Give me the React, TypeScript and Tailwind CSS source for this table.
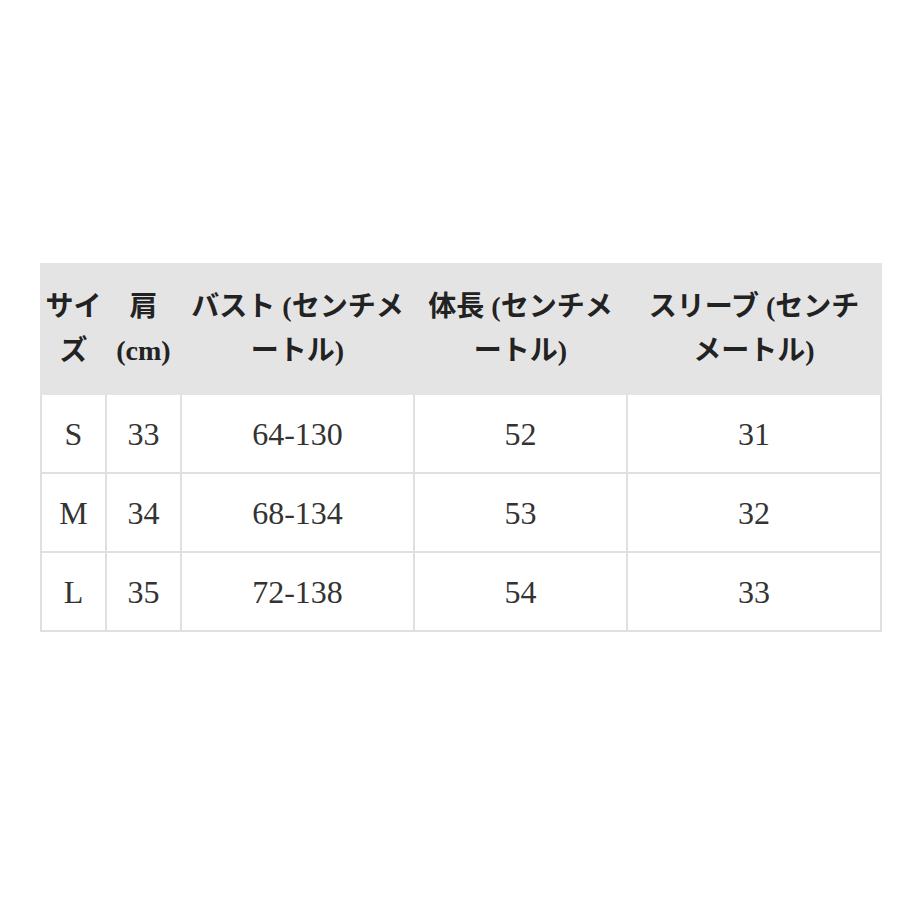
const headers: string[][] = [
    ['サイ', 'ズ'],
    ['肩', '(cm)'],
    ['バスト (センチメ', 'ートル)'],
    ['体長 (センチメ', 'ートル)'],
    ['スリーブ (センチ', 'メートル)'],
]

const rows: string[][] = [
    ['S', '33', '64-130', '52', '31'],
    ['M', '34', '68-134', '53', '32'],
    ['L', '35', '72-138', '54', '33'],
]

export default function App() {
    return (
        <div className="w-[920px] h-[920px] bg-white pt-[263px] pl-[40px]">
            <table
                className="table-fixed border-collapse w-[840px]"
                style={{ fontFamily: '"Liberation Serif", "Noto Sans CJK JP", serif' }}
            >
                <colgroup>
                    <col className="w-[65px]" />
                    <col className="w-[75px]" />
                    <col className="w-[233px]" />
                    <col className="w-[213px]" />
                    <col className="w-[254px]" />
                </colgroup>
                <thead>
                    <tr className="h-[130px] bg-[#e4e4e4]">
                        {headers.map((h, i) => (
                            <th
                                key={i}
                                className="border-2 border-[#e4e4e4] p-0 text-center align-middle text-[28px] leading-[44px] font-bold text-[#222] whitespace-nowrap"
                            >
                                {h[0]}
                                <br />
                                {h[1]}
                            </th>
                        ))}
                    </tr>
                </thead>
                <tbody>
                    {rows.map((r, i) => (
                        <tr key={i} className="h-[79px]">
                            {r.map((c, j) => (
                                <td
                                    key={j}
                                    className="border-2 border-[#e0e0e0] p-0 text-center align-middle text-[32px] text-[#333]"
                                >
                                    {c}
                                </td>
                            ))}
                        </tr>
                    ))}
                </tbody>
            </table>
        </div>
    )
}
